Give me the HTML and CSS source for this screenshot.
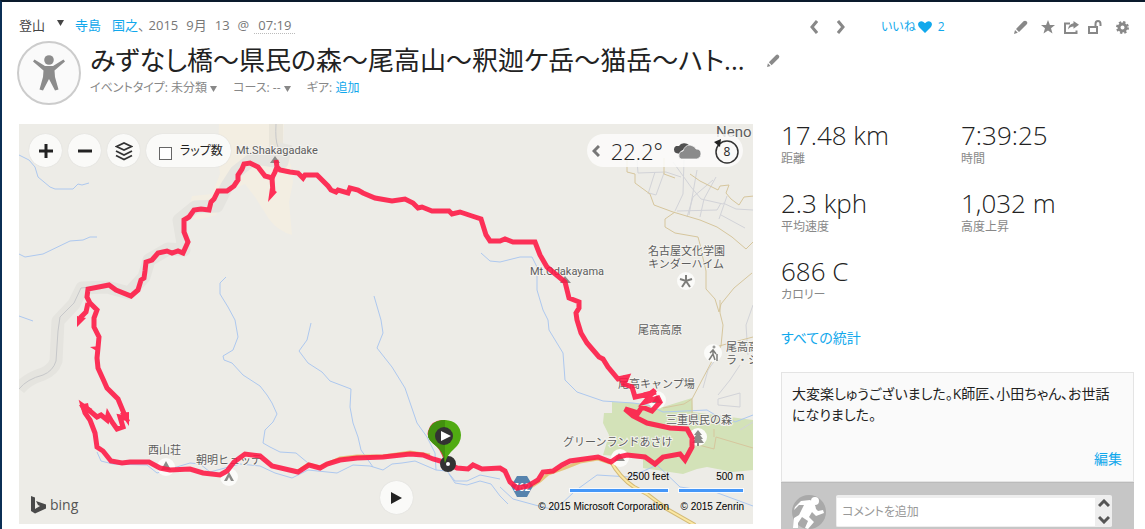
FILE: index.html
```html
<!DOCTYPE html>
<html lang="ja">
<head>
<meta charset="utf-8">
<title>登山 – みずなし橋～県民の森</title>
<link rel="stylesheet" href="styles.css">
</head>
<body>
<div class="page">
  <main class="activity">
    <header class="activity-head">
      <div class="byline">
        <span class="sport">登山</span>
        <button class="caret-btn" aria-label="種目を変更"><svg width="7" height="6" viewBox="0 0 7 6"><path d="M0 0h7L3.500 6z" fill="#444"/></svg></button>
        <a class="author" href="#"><span>寺島</span><span>国之</span></a>
        <span class="date"><span class="comma">、</span><span>2015</span><span>9月</span><span>13</span><span>@</span></span>
        <span class="time">07:19</span>
      </div>
      <div class="title-row">
        <div class="avatar">
          <svg width="34" height="36" viewBox="0 0 34 36" fill="#8c8c8c"><circle cx="17" cy="5" r="4.800"/><path d="M1 6.500 2.500 4.500 13 11h8L31.500 4.500 33 6.500 22.500 15.500 23 22 26.500 34.500 23 35.500 17 24 11 35.500 7.500 34.500 11 22 11.500 15.500z"/></svg>
        </div>
        <div class="title-block">
          <h1>みずなし橋～県民の森～尾高山～釈迦ケ岳～猫岳～ハト...</h1>
          <div class="meta">
            <button class="meta-btn">イベントタイプ: 未分類 <svg width="7" height="6" viewBox="0 0 7 6"><path d="M0 0h7L3.500 6z" fill="#888"/></svg></button>
            <button class="meta-btn">コース: -- <svg width="7" height="6" viewBox="0 0 7 6"><path d="M0 0h7L3.500 6z" fill="#888"/></svg></button>
            <span>ギア: <a href="#">追加</a></span>
          </div>
        </div>
        <button class="icon-btn title-edit" aria-label="タイトルを編集"><svg width="13" height="13" viewBox="0 0 14 14" fill="#8a8a8a"><path d="M0 14 1 10 3.800 12.800zM2 9 9.500 1.300Q11 0 12.500 1.300T12.800 4.300L5 12z"/></svg></button>
      </div>
    </header>

    <section class="map" aria-label="地図">
      <svg class="map-canvas" viewBox="19 124 734 400" preserveAspectRatio="xMinYMin slice">
        <path d="M19 124h734v400H19z" fill="#edece7"/>
        <path d="M219 124h65l-1 20 8 22 2 16-4 20 3 33q-14-4-23-16l-14-22-10-13-12 5-10 12-7 14-20 5-8-8 4-16 20-2 8-20-2-20z" fill="#f3eee2"/>
        <path d="M269 124h14v20l-6 20-8-14z" fill="#e9e5da"/>
        <g fill="none" stroke="#e5e4df" stroke-linejoin="round">
          <path stroke-width="13" d="M19 389q8-10 24-15 10-4 13-13l2-40 16-17 8-16 25-1 22 6 15-16 5-17 19-11 16 1-5-30 16-13 22-1 10-20 9-14 18-14 28 4 4-18"/>
        </g>
        <path d="M19 389q8-10 24-14 10-4 13-14l2-30 2-14 14-14 7-15 10-1M276 124q-1 16 2 23" fill="none" stroke="#c7c8ca"/>
        <path d="M612 402L633 403 663 407 692 398 693 412 730 417 753 420V470L733 472 707 467 697 469 683 474 643 468V458L603 455 609 435 603 423 604 413H612z" fill="#d3e2b8"/>
        <g fill="none" stroke="#adc8ef" stroke-linejoin="round">
          <path d="M19 155L29 160 35 167 38 177 50 187 55 189H73L78 184 82 185 89 183M19 254L25 257 43 254 70 241 83 240 90 237H97M19 316L33 321"/>
          <path d="M226 277L220 283V294L228 307 235 320 238 337 233 350 223 356 224 360 232 363 243 375 260 386 267 395 272 403 277 414 273 422 265 430 263 443 270 447 280 452 296 453 308 463"/>
          <path d="M311 323L307 340 299 351 308 363 322 372 330 381 351 389 350 407 353 423 358 437 361 450 373 467"/>
          <path d="M374 296L381 320 383 333 377 348 392 367 405 388 417 423 427 437 435 453 436 470"/>
          <path d="M481 253L490 261 500 262 520 257 532 257 537 267 537 290 543 310 548 320 549 330 563 353 565 380 577 392 603 401 633 403 648 405 663 412 707 410 717 416 727 417 735 422 753 415"/>
          <path d="M97 452L101 461 113 464 147 465 157 473 190 463 200 464 210 472 240 464 260 466 275 473 292 478 308 470 337 473 353 465 370 466 383 470 392 464 402 463 415 461 436 470 447 471 455 481 467 481 480 475 500 479"/>
          <path d="M449 474L455 483 467 485 480 481 491 484 500 496 508 504M500 487L513 499 535 505 555 510 575 491 597 475 630 477 657 465 680 487 715 492 753 506"/>
        </g>
        <g fill="none" stroke="#d2d3d8" stroke-width="1">
          <path d="M637 160l1 13 28-1 15 5M664 173l-8 22-7-2M655 172l-7 22M684 160l-1 34-8 17M697 170l-8 45M713 180l-20 17-6 20M677 211l40-1 4-7M673 162l18 25 10 12 22 5M716 177l-12 22-4 18M727 196l-8 23M721 215l24 13M723 203l13 6 17 1M718 356l-10 14-5 18M753 305l-7 20 2 30M740 365l-10 15-12 15M718 399v6l22 2v-14zM740 430l13-8"/>
        </g>
        <g fill="none" stroke="#d6c69d">
          <path d="M627 160v12l8 2v9l15 11 4 11 19 7 27 8 17 7 15 10 14 12 14-14 1-18h6l-6-9-7-12-10 1-5 8-8-6-5-6 3-8-9 1-2 4-18-9-10-7M675 178l-11-4V158M675 212l-10 7v8l10 6 23 4q3 10 4 17l4 17v18l9 10 4 13 2-8 13-16 18-15"/>
          <path d="M720 300v13l3 12-2 21-9 15-20 38-8 5-21 4M719 346l34-9M692 399v20"/>
          <path d="M695 444l19 5 2-12 37 11M714 437v-8"/>
        </g>
        <path d="M610 460q10 18 24 27l13 7 20 15 28 16" fill="none" stroke="#d4bb78" stroke-width="4"/>
        <path d="M610 460q10 18 24 27l13 7 20 15 28 16" fill="none" stroke="#fbe8a3" stroke-width="2"/>
        <path d="M298 471l10-7 12 3 20-9 17-2 26 0 27-4 20 3M528 489l12-8 8-7 17-6 15-6 18-3 12 4" fill="none" stroke="#e5c57d" stroke-width="3"/>
        <g fill="#fbfbf9">
          <circle cx="166" cy="467" r="9"/><circle cx="229" cy="477" r="9"/><circle cx="686" cy="281" r="9"/><circle cx="713" cy="353" r="9"/><circle cx="698" cy="437" r="9"/><circle cx="620" cy="458" r="9"/><circle cx="657" cy="400" r="9"/>
        </g>
        <g fill="#8b8b88">
          <path d="M161 470l5-9 5 9zM224 481l5-9 5 9h-3l-2-4-2 4zM270 163l5-7 5 7zM560 283l5-7 6 7zM614 461l5-8 6 8zM652 403l5-8 5 8z"/>
          <path d="M698 430l4 5h-2l3 4h-2l3 4h-5v3h-2v-3h-5l3-4h-2l3-4h-2z"/>
        </g>
        <g fill="none" stroke="#7d7d7a">
          <path stroke-width="2" d="M686 275v6M680 279l6 2 6-2M682 287l4-6 4 6"/>
          <path stroke-width="1.500" d="M713 350v4l-4 6M710 353l3-3 3 4M713 354l2 6M717 354v7"/>
          <circle cx="714" cy="347" r="1"/>
        </g>
        <path d="M517 476h10l6 10-6 11h-10l-6-11z" fill="#5683ad"/>
        <g class="place" fill="#5d5d5d">
          <text x="236" y="154">Mt.Shakagadake</text>
          <text x="530" y="275">Mt.Odakayama</text>
          <text class="place-town" x="716" y="137">Neno</text>
          <text x="648" y="255">名古屋文化学園</text>
          <text x="648" y="268">キンダーハイム</text>
          <text x="638" y="334">尾高高原</text>
          <text x="726" y="351">尾高高</text>
          <text x="726" y="364">ラ・シ</text>
          <text x="618" y="388">尾高キャンプ場</text>
          <text x="666" y="424">三重県民の森</text>
          <text x="563" y="446">グリーンランドあさけ</text>
          <text x="148" y="454">西山荘</text>
          <text x="196" y="464">朝明ヒュッテ</text>
          <text class="place-road" x="513" y="491">762</text>
        </g>
        <g class="route">
          <path d="M447 463L433 459 423 455 410 454 383 457 357 458 340 460 327 464 320 468 309 465 298 472 272 466 260 456 245 454 234 462 227 471 220 475 203 473 190 469 170 470 160 468 149 462 130 462 122 463 111 461 103 451 97 447 95 433 90 420 85 413 83 406 90 411 97 417 101 415 107 420 108 415 112 422 117 429 123 427 120 417 126 418 123 411 118 399 107 388 103 379 98 368 97 358 98 348 99 337 94 327 94 318 97 310 90 303 87 297 88 289 109 285 116 290 131 296 138 290 141 280 144 278 145 271 146 262 152 260 158 253 167 251 172 253 178 251 183 253 188 242 184 232 184 220 189 217 194 210 201 209 209 210 211 202 214 199 218 191 227 191 234 186 238 180 238 175 242 169 244 164 250 163 258 167 265 176 272 178 275 172 277 167 276 160 277 167 280 170 290 172 298 173 303 178 305 175 317 175 328 186 331 190 336 192 338 190 348 193 350 188 358 190 363 193 375 198 392 201 405 199 413 203 418 208 422 207 432 211 449 211 452 214 460 212 472 216 481 219 486 235 490 241 500 241 505 239 513 242 522 242 535 242 540 255 547 267 565 282 569 298 579 302 579 308 576 313 577 320 581 333 587 343 599 357 603 359 608 367 618 379 627 377 624 384 632 387 635 397 650 394 655 390 645 402 658 398 660 402 652 411 642 407 638 413 625 409 633 416 647 423 670 428 687 429 692 438 692 447 685 460 680 454 663 457 655 464 645 457 627 455 618 457 611 462 598 457 570 461 562 465 553 471 543 472 538 480 528 486 517 488 510 482 505 471 500 468 482 469 473 465 468 469 457 468z"/>
          <path d="M272 178L273 193M88 303L86 312 80 318M91 411L83 406M626 376L622 384M644 395L656 392"/>
        </g>
        <path class="route-tip" d="M277 192l-9 10 2-14zM77 316l0 11 9-9zM90 347l10 6v-7zM120 413l9-1v14zM79 405l9-2 2 10-6 1z"/>
        <path d="M446 461q-4-13-11-18-7-7-5-12 3-11 15-11 15 2 15 16 0 7-7 12-5 4-7 13z" fill="#e83f54" transform="translate(-2 0)"/>
        <circle cx="448" cy="464" r="5" fill="#fff" stroke="#333" stroke-width="6"/>
        <path d="M445 463q-1-11-9-17-9-7-8-12 2-14 17-14 15 1 16 15 0 8-7 14-7 6-9 14z" fill="#50ab12"/>
        <path d="M445 463q-1-11-9-17-9-7-8-12 2-14 17-14z" fill="#43900f"/>
        <circle cx="444" cy="436" r="9" fill="#333"/><path d="M441 431l10 5-10 5z" fill="#fff"/>
      </svg>

      <div class="map-top">
        <div class="map-tools">
          <button class="round-btn" aria-label="拡大"><svg width="14" height="14"><path d="M0 7h14M7 0v14" stroke="#222" stroke-width="3"/></svg></button>
          <button class="round-btn" aria-label="縮小"><svg width="14" height="14"><path d="M0 7h14" stroke="#222" stroke-width="3"/></svg></button>
          <button class="round-btn" aria-label="レイヤー"><svg width="18" height="20" viewBox="0 0 18 20" fill="none" stroke="#333" stroke-width="1.800"><path d="M1.500 5.500 9 2l7.500 3.500L9 9zM1 10l8 4 8-4M1 14.500l8 4 8-4"/></svg></button>
          <label class="lap-toggle"><input type="checkbox">ラップ数</label>
        </div>
        <div class="weather">
          <button class="icon-btn" aria-label="閉じる"><svg width="8" height="12" fill="none" stroke="#777" stroke-width="3"><path d="M7 1 2 6l5 5"/></svg></button>
          <span class="temp">22.2°</span>
          <svg width="30" height="18" viewBox="0 0 30 18"><path d="M4 11a4 4 0 0 1 0-7l3 0a6 5 0 0 1 10-1l-2 3-6 3-1 3z" fill="#505050"/><path d="M9 17q-3-1-2-5 1-3 4-3 2-6 7-6 5 1 6 4 5 0 5 5 0 4-4 5z" fill="#8b8b8b" stroke="#fff" stroke-width=".7"/></svg>
          <span class="wind"><svg width="26" height="26" viewBox="0 0 26 26"><circle cx="14" cy="14" r="11" fill="none" stroke="#333" stroke-width="1.500"/><path d="M1 4 8 1l-1 8z" fill="#222"/></svg><span class="wind-value">8</span></span>
        </div>
      </div>

      <div class="bing"><svg width="15" height="18" viewBox="0 0 15 18" fill="#4a4a4a"><path d="M0 0 4 1.500V13l5-3-2-1-2-4 10 3.500v4L4 17.500 0 15z"/></svg>bing</div>
      <button class="round-btn play" aria-label="再生"><svg width="11" height="12"><path d="M0 0l11 6-11 6z" fill="#222"/></svg></button>
      <div class="scales">
        <div class="scale scale-feet"><span>2500 feet</span><i></i></div>
        <div class="scale scale-metre"><span>500 m</span><i></i></div>
        <small>© 2015 Microsoft Corporation</small>
        <small>© 2015 Zenrin</small>
      </div>
    </section>
  </main>

  <aside class="side">
    <nav class="toolbar">
      <div class="pager">
        <a href="#" aria-label="前へ"><svg width="8" height="14" fill="none" stroke="#888" stroke-width="3"><path d="M7 1 2 7l5 6"/></svg></a>
        <a href="#" aria-label="次へ"><svg width="8" height="14" fill="none" stroke="#888" stroke-width="3"><path d="M1 1l5 6-5 6"/></svg></a>
      </div>
      <a class="like" href="#">いいね<svg width="14" height="12" viewBox="0 0 14 12"><path d="M7 12 1 6Q-1 3 1.200 1 4-1 7 2.300 10-1 12.800 1 15 3 13 6z" fill="#11a8ec"/></svg><span class="like-count">2</span></a>
      <div class="actions">
        <button class="icon-btn" aria-label="編集"><svg width="14" height="14" viewBox="0 0 14 14" fill="#888"><path d="M0 14 1 10 3.800 12.800zM2 9 9.500 1.300Q11 0 12.500 1.300T12.800 4.300L5 12z"/></svg></button>
        <button class="icon-btn star" aria-label="お気に入り"><svg width="14" height="14" viewBox="0 0 14 14" fill="#888"><path d="M7 0l1.900 4.900H14L10 8.200l1.500 5.300L7 10.500l-4.500 3L4 8.200 0 4.900h5.100z"/></svg></button>
        <button class="icon-btn" aria-label="共有"><svg width="15" height="13" viewBox="0 0 15 13"><path d="M6 2.500H1V12h11.500V9.500" fill="none" stroke="#888" stroke-width="2"/><path d="M15 3.800 9.500 0v2.200Q4.500 3 4 8.500 6 5.500 9.500 5.500v2.300z" fill="#888"/></svg></button>
        <button class="icon-btn" aria-label="公開設定"><svg width="14" height="14" viewBox="0 0 14 14" fill="none" stroke="#888" stroke-width="2"><path d="M1 7h8v6H1zM7.500 7V4q0-3 2.500-3t2.500 3v2"/></svg></button>
        <button class="icon-btn gear" aria-label="設定"><svg width="13" height="13" viewBox="0 0 13 13"><circle cx="6.500" cy="6.500" r="3.500" fill="none" stroke="#888" stroke-width="3"/><circle cx="6.500" cy="6.500" r="5.500" fill="none" stroke="#888" stroke-width="2" stroke-dasharray="2.300 2.020"/></svg></button>
      </div>
    </nav>

    <dl class="stats">
      <div><dd>17.48 km</dd><dt>距離</dt></div>
      <div><dd>7:39:25</dd><dt>時間</dt></div>
      <div><dd>2.3 kph</dd><dt>平均速度</dt></div>
      <div><dd>1,032 m</dd><dt>高度上昇</dt></div>
      <div><dd>686 C</dd><dt>カロリー</dt></div>
    </dl>
    <a class="all-stats" href="#">すべての統計</a>

    <section class="notes">
      <p>大変楽しゅうございました。K師匠、小田ちゃん、お世話になりました。</p>
      <a href="#">編集</a>
    </section>
    <section class="comment">
      <svg class="comment-avatar" width="34" height="34" viewBox="0 0 34 34"><circle cx="17" cy="17" r="17" fill="#a9a9a9"/><g fill="#fff"><circle cx="23" cy="6" r="4"/><path d="M3 12 9 6l9-1q5 2 6 9l2 2 5-1 1 3-8 3-4-4-3 5 5 5-6 7-3-1 3-7-6-4-4 6v5l-5 0 1-10 5-3 5-10-5 0-5 5z"/></g></svg>
      <div class="comment-box">
        <textarea aria-label="コメントを追加" placeholder="コメントを追加" rows="1"></textarea>
        <div class="comment-scroll">
          <button class="icon-btn" aria-label="上へ"><svg width="12" height="9" fill="none" stroke="#555" stroke-width="3"><path d="M1 7l5-5 5 5"/></svg></button>
          <button class="icon-btn" aria-label="下へ"><svg width="12" height="9" fill="none" stroke="#555" stroke-width="3"><path d="M1 2l5 5 5-5"/></svg></button>
        </div>
      </div>
    </section>
  </aside>
</div>
</body>
</html>
```
FILE: styles.css
```css
* { box-sizing: border-box; }
body {
  margin: 0;
  min-height: 100vh;
  background: #fff;
  border-top: 2px solid #0a1a2c;
  border-left: 2px solid #0b2f55;
  color: #222;
  font: 12px/16px "Open Sans", "Noto Sans CJK JP", sans-serif;
  font-feature-settings: "palt";
  display: flex;
}
a { color: #11a8ec; text-decoration: none; }
button { border: 0; padding: 0; background: none; color: inherit; font: inherit; cursor: pointer; }
svg { flex: none; }
h1, p, dl, dd { margin: 0; }

.page {
  flex: 1;
  display: grid;
  grid-template-columns: minmax(0, 1fr) 353px;
  gap: 28px;
  padding: 0 11px 0 17px;
}
.activity { display: flex; flex-direction: column; padding-bottom: 5px; }
.activity-head { height: 122px; padding-top: 14px; }
.icon-btn { display: flex; align-items: center; }

.byline { display: flex; align-items: center; height: 18px; color: #777; }
.sport { font-size: 13px; color: #444; }
.caret-btn { display: flex; margin: 0 11px 4px 12px; }
.author { display: flex; gap: 11px; font-size: 13px; }
.date { display: flex; gap: 8px; font-size: 13px; }
.comma { margin-right: -4px; }
.time { margin-left: 5px; padding: 0 4px; font-size: 13px; border-bottom: 1px dotted #bbb; }

.title-row { display: flex; margin: 7px -28px 0 0; }
.avatar {
  width: 64px; height: 64px; flex: none;
  margin: 0 9px 0 -2px;
  display: grid; place-items: center;
  border: 2px solid #ccc; border-radius: 50%;
  background: #fafafa;
}
.title-block { flex: 0 1 650px; min-width: 0; }
h1 {
  font-size: 26px; line-height: 38px; font-weight: 400;
  white-space: nowrap;
}
.title-edit { align-self: flex-start; margin: 13px 0 0 27px; }
.meta { display: flex; gap: 16px; color: #888; line-height: 18px; }

.map { position: relative; flex: 1; min-height: 400px; overflow: hidden; background: #edece7; }
.map-canvas { position: absolute; inset: 0; width: 100%; height: 100%; }
.place { font: 11px Roboto, "Noto Sans CJK JP", sans-serif; paint-order: stroke; stroke: #f4f3ef; stroke-width: 2px; }
.place-town { font-size: 15px; }
.place-road { font-size: 10px; font-weight: 700; fill: #fff; stroke: none; }
.route { fill: none; stroke: #ff1744; stroke-width: 5px; stroke-linejoin: miter; opacity: .88; }
.route-tip { fill: #ff2f57; }

.map-top { position: absolute; top: 10px; left: 10px; right: 10px; display: flex; justify-content: space-between; }
.map-tools { display: flex; gap: 6px; }
.round-btn {
  width: 33px; height: 33px;
  display: grid; place-items: center;
  border-radius: 50%;
  background: #fafaf8;
  box-shadow: 0 0 1px #ccc;
}
.lap-toggle {
  display: flex; align-items: center; gap: 8px;
  width: 85px; height: 33px; padding-left: 13px;
  border-radius: 17px; background: #fafaf8; box-shadow: 0 0 1px #ccc;
  white-space: nowrap;
}
.lap-toggle input {
  appearance: none; width: 13px; height: 13px; margin: 6px 0 0;
  border: 1px solid #666; background: #fff;
}
.weather {
  display: flex; align-items: center; gap: 9px;
  height: 33px; padding: 0 4px 0 5px;
  border-radius: 17px; background: rgba(252, 252, 250, .85);
}
.temp { font-size: 22px; font-weight: 300; line-height: 32px; margin-left: 2px; }
.wind { display: grid; place-items: center; margin-left: 2px; }
.wind > * { grid-area: 1 / 1; }
.wind-value { padding: 2px 0 0 2px; }

.bing { position: absolute; left: 12px; bottom: 8px; display: flex; align-items: center; gap: 4px; font-size: 14px; line-height: 22px; color: #555; }
.play { position: absolute; left: 361px; bottom: 10px; }
.scales {
  position: absolute; right: 9px; bottom: 11px;
  display: grid; grid-template-columns: 100px 66px; gap: 8px 9px;
  justify-items: end;
  font: 10px/12px "Liberation Sans", Arial, sans-serif; color: #000;
}
.scale { width: 100%; display: flex; flex-direction: column; align-items: flex-end; gap: 5px; }
.scale i { width: 100%; height: 5px; background: #4597f8; border: 1px solid #f8fbff; }
.scales small { font-size: 10px; white-space: nowrap; }

.side { display: flex; flex-direction: column; }
.toolbar { display: flex; align-items: center; height: 16px; margin: 17px 5px 0 29px; }
.pager { display: flex; gap: 19px; }
.pager a, .actions { display: flex; align-items: center; }
.like { display: flex; align-items: center; gap: 2px; margin-left: 36px; }
.like-count { margin-left: 4px; }
.actions { margin-left: auto; gap: 9px; }
.star { margin-left: 4px; }
.gear { margin-left: 5px; }

.stats { display: grid; grid-template-columns: 180px 1fr; margin-top: 83px; }
.stats > div { display: flex; flex-direction: column; height: 68px; }
.stats dd { font-size: 26px; font-weight: 300; line-height: 34px; }
.stats dt { line-height: 14px; color: #888; }
.all-stats { font-size: 14px; line-height: 20px; margin-top: 6px; }

.notes {
  display: flex; flex-direction: column;
  height: 110px; margin-top: 24px; padding: 10px 11px 12px 10px;
  border: 1px solid #e4e4e4; background: #fafafa;
}
.notes p { font-size: 14px; line-height: 21px; }
.notes a { align-self: flex-end; margin-top: auto; font-size: 14px; line-height: 20px; }
.comment {
  flex: 1; display: flex; gap: 10px;
  padding: 12px 22px 0 11px;
  background: #c6c6c6; border-top: 1px solid #bbb;
}
.comment-box { flex: 1; display: flex; height: 32px; background: #fff; border: solid #eee; border-width: 3px 0 1px 1px; border-radius: 2px; }
.comment-box textarea {
  flex: 1; min-width: 0; border: 0; padding: 4px 5px; resize: none; overflow: hidden;
  background: #fff; font: 12px/20px "Open Sans", "Noto Sans CJK JP", sans-serif; font-feature-settings: "palt";
}
.comment-box textarea::placeholder { color: #999; opacity: 1; }
.comment-scroll { width: 17px; display: flex; flex-direction: column; align-items: center; justify-content: space-between; padding: 1px 0 2px; background: #eee; }
```
